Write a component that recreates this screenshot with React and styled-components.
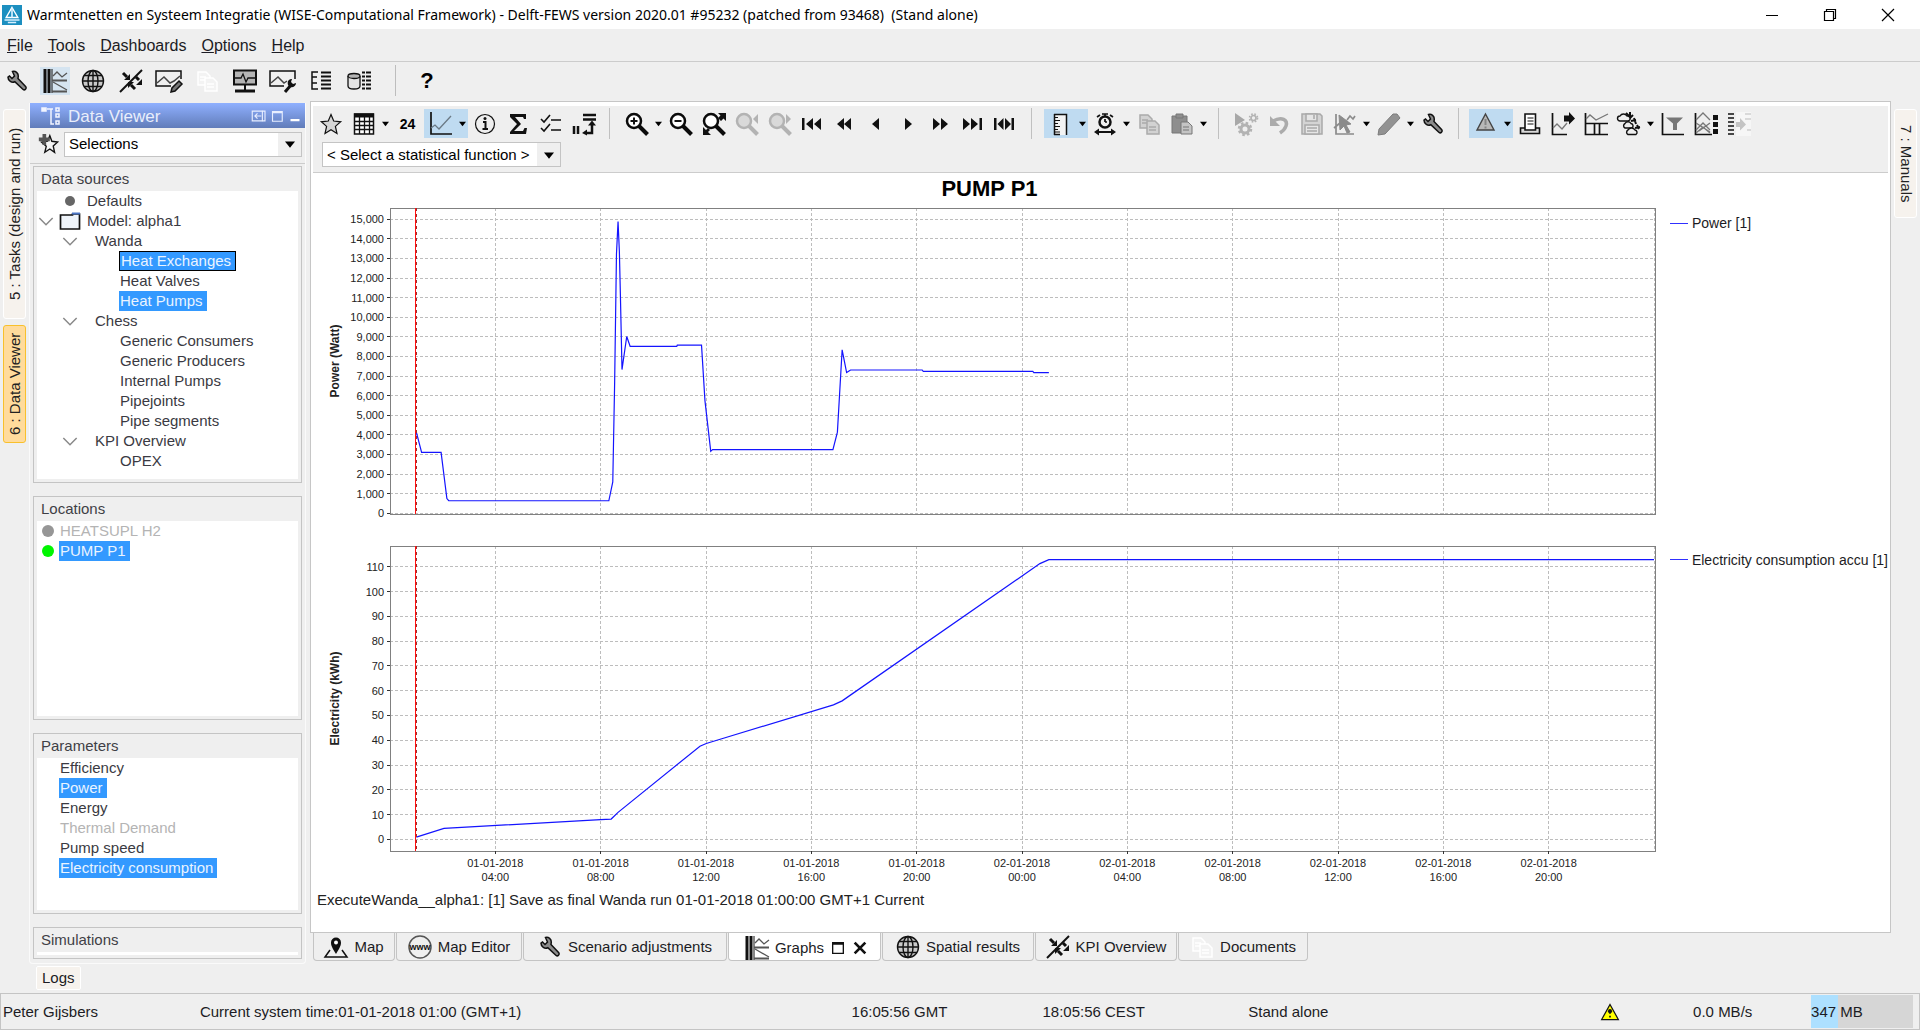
import React, { useLayoutEffect, useRef, useState } from "react";
import styled, { createGlobalStyle, css } from "styled-components";

const GlobalStyle = createGlobalStyle`
  * { box-sizing: border-box; }
  body { margin: 0; background: #efefef; }
  button, select { font: inherit; color: inherit; }
`;

const line = "#cccccc";
const face = "#efefef";
const pick = "#3399ff";

/* ---------- icons, drawn on a 24 x 24 grid ---------- */

const S = "#111111";

const lens = (inner, color = "#0b0b0b", fill = "#ffffff") => (
  <>
    <path d="M14 14l8.500 8.500" stroke={color} strokeWidth="4" />
    <circle cx="9" cy="9" r="7" fill={fill} stroke={color} strokeWidth="2.500" />
    {inner}
  </>
);

const docs = (stroke, fill) => (
  <g fill={fill} stroke={stroke} strokeWidth="1.500">
    <path d="M3 3h8l4 4v9H3z" />
    <path d="M5 8h6M5 11h6" />
    <path d="M10 9h8l4 4v9H10z" />
    <path d="M12 15h7M12 18h7" />
  </g>
);

const icons = {
  wrench: (
    <path
      d="M7.500 2.500c3-.8 6 1.500 5.800 4.700l-.3 2.300 7.800 8.300c1.200 1.500-1 3.900-2.700 2.700l-8.300-7.800c-3 1.300-6.800-.7-6.800-4.500l1.500-1.200 2.500 2.500 2.500-2.500z"
      fill="#8c8c8c"
      stroke={S}
      strokeWidth="1.500"
    />
  ),
  graphs: (
    <g fill="none">
      <path d="M2 0v24M6 0v24" stroke={S} strokeWidth="3" />
      <path d="M9 0v24" stroke={S} />
      <path d="M9 11.500h15M9 22.500h15" stroke="#555" strokeWidth="2" />
      <path d="M10 7l4-4 5 5 5-4M10 13l14 8" stroke="#555" strokeWidth="1.300" />
    </g>
  ),
  globe: (
    <g fill="none" stroke={S} strokeWidth="1.400">
      <circle cx="12" cy="12" r="10.500" fill="#c9c9c9" />
      <ellipse cx="12" cy="12" rx="5" ry="10.500" />
      <path d="M1.500 12h21M3 6.500h18M3 17.500h18M12 1.500v21" />
    </g>
  ),
  sparks: (
    <g stroke={S} fill={S}>
      <path d="M1 23L23 1" strokeWidth="2" />
      <path d="M4 4l4 4M17 8l3 3M16 20l-4-4" strokeWidth="3" />
      <path d="M11 11H5l6-6zM23 16h-6l6-6zM9 13h6l-6 6z" stroke="none" />
    </g>
  ),
  chartEdit: (
    <g fill="none" stroke={S}>
      <path d="M14 17H-1V2h25v8" strokeWidth="1.500" />
      <path d="M0 14l7-6 6 6 4-2 6-5" stroke="#444" strokeWidth="1.500" />
      <path d="M14 23l1-4 7-7 3 3-7 7z" fill="#777" strokeWidth="1.500" />
    </g>
  ),
  docsFaint: docs("#ffffff", "#f3f3f3"),
  monitor: (
    <g fill="none" stroke={S}>
      <path d="M1 1.500h22v14H1z" fill="#b5b5b5" strokeWidth="2" />
      <path d="M2 9h6l2-4 3 8 2-4h7" strokeWidth="1.300" />
      <path d="M12 16v6" strokeWidth="2" />
      <path d="M2 22h20" strokeWidth="3" />
    </g>
  ),
  chartWrench: (
    <g fill="none" stroke={S}>
      <path d="M13 17H-1V2h25v8" strokeWidth="1.500" />
      <path d="M0 14l7-6 6 6 3-2" stroke="#444" strokeWidth="1.500" />
      <path d="M14 23l6-7" strokeWidth="3" />
      <path d="M17 16c-1-4 1-6 4-6l-1 3 2 2 3-1c0 3-3 5-6 4z" fill={S} stroke="none" />
    </g>
  ),
  listTree: (
    <g fill="none" stroke={S}>
      <path d="M9 3H3v17h6M3 8h5M3 14h5" strokeWidth="1.500" />
      <path d="M12 3.500h10M12 7.500h10M12 11.500h10M12 15.500h10M12 19.500h10" strokeWidth="2" />
    </g>
  ),
  dbList: (
    <g fill="none" stroke={S}>
      <path d="M1 7v10c0 4 12 4 12 0V7" fill="#e4e4e4" strokeWidth="1.300" />
      <ellipse cx="7" cy="7" rx="6" ry="2.500" fill="#b5b5b5" strokeWidth="1.300" />
      <path d="M15 3.500h3M15 7.500h3M15 11.500h3M15 15.500h3M15 19.500h3M19 3.500h5M19 7.500h5M19 11.500h5M19 15.500h5M19 19.500h5" strokeWidth="2" />
    </g>
  ),
  star: <path d="M12 2.500l2.700 6.500 7 .8-5.300 4.600 1.600 7.100-6-3.800-6 3.800 1.600-7.100L2.300 9.800l7-.8z" fill="#d5d5d5" stroke={S} strokeWidth="1.200" />,
  starAdd: (
    <g>
      <path d="M14 3l2.200 6 6.300.8-4.800 4.400 1.500 7-5.200-3.700L8.500 21l1.600-6.500L5 10l6.500-1z" fill="#f4f4f4" stroke={S} strokeWidth="1.500" />
      <path d="M6 1h4v4h4v4h-4v4H6V9H2V5h4z" fill="#555" />
    </g>
  ),
  table: (
    <g fill="none" stroke={S}>
      <path d="M2.500 2h19v20h-19z" fill="#fff" strokeWidth="1.500" />
      <path d="M2 3.500h20" strokeWidth="4" />
      <path d="M2 9.500h20M2 13.500h20M2 17.500h20M7.500 5v17M12.500 5v17M17.500 5v17" strokeWidth="1.300" />
    </g>
  ),
  chart: (
    <g fill="none">
      <path d="M2 0v22h21" stroke={S} strokeWidth="1.700" />
      <path d="M2 16l4-3 4 4L22 4" stroke="#6b7a86" strokeWidth="1.300" />
    </g>
  ),
  info: (
    <g stroke={S} fill="none">
      <circle cx="12" cy="12" r="9.500" strokeWidth="1.200" />
      <path d="M10 10h2.500v6.500M9.500 17h5.500" strokeWidth="2" />
      <circle cx="12" cy="6.500" r="1.500" fill={S} stroke="none" />
    </g>
  ),
  sigma: <path d="M4 2h16v5h-2l-1-2H9l6 7-7 7h9l1.500-3H21l-1 6H4v-2l7-8-7-7z" fill={S} />,
  checks: (
    <g fill="none" stroke={S} strokeWidth="1.600">
      <path d="M2 7l3 3 6-7M2 16l3 3 6-7M12 8h10M12 18h10" />
    </g>
  ),
  swap: (
    <g stroke={S} fill={S}>
      <path d="M11 3h13M11 7.500h13M2 14v8M6 14v8" strokeWidth="2.500" />
      <path d="M20 12v9h-6" fill="none" strokeWidth="2.500" />
      <path d="M20 8.500l4 5h-8zM10 21l5-3.500v6z" stroke="none" />
    </g>
  ),
  zoomIn: lens(<path d="M5.500 9h7M9 5.500v7" stroke={S} strokeWidth="2" />),
  zoomOut: lens(<path d="M5.500 9h7" stroke={S} strokeWidth="2" />),
  zoomFit: (
    <g>
      {lens(null)}
      <path d="M16 1h8v8l-2.500-2.500-2.500 2.500-3-3L18.500 3.500zM1 15v8h8l-3-3 2-2-2-2-2 2z" fill={S} />
    </g>
  ),
  zoomPrev: lens(<path d="M23 2v10l-5-5z" fill="#b3b3b3" />, "#b3b3b3", "#d9d9d9"),
  zoomNext: lens(<path d="M18 2v10l5-5z" fill="#b3b3b3" />, "#b3b3b3", "#d9d9d9"),
  first: <path d="M2 6h2.500v12H2zM13 6v12l-7-6zM21 6v12l-7-6z" fill={S} />,
  rewind: <path d="M12 6v12l-7-6zM19 6v12l-7-6z" fill={S} />,
  back: <path d="M15 6v12l-7-6z" fill={S} />,
  next: <path d="M9 6v12l7-6z" fill={S} />,
  forward: <path d="M5 6v12l7-6zM13 6v12l7-6z" fill={S} />,
  last: <path d="M22 6h-2.500v12H22zM11 6v12l7-6zM3 6v12l7-6z" fill={S} />,
  span: <path d="M2 6h2.500v12H2zM11.500 6v12l-6-6zM13 6v12l6-6zM19.500 6H22v12h-2.500z" fill={S} />,
  ruler: (
    <g fill="none" stroke={S}>
      <path d="M5 2h13v21H5z" fill="#f3f3f3" stroke="none" />
      <path d="M5 2.500h12.500V23M5.500 2v21M5 22.500h6" strokeWidth="1.500" />
      <path d="M5 5.500h4M5 8.500h6M5 11.500h4M5 14.500h6M5 17.500h4M5 20h6" strokeWidth="1.200" />
    </g>
  ),
  clock: (
    <g fill="none" stroke={S}>
      <circle cx="12" cy="10" r="5.500" strokeWidth="2.500" />
      <path d="M12 10V7M12 10h2M9 2h6M12 2v3M4 5l3-2M20 5l-3-2" strokeWidth="1.700" />
      <path d="M3 20h18" strokeWidth="2" />
      <path d="M1 20l5-3.500v7zM23 20l-5-3.500v7z" fill={S} stroke="none" />
    </g>
  ),
  copy: docs("#ababab", "#d2d2d2"),
  paste: (
    <g fill="#8e8e8e" stroke="#777">
      <path d="M2 4h15v17H2z" />
      <path d="M6 2h7v4H6z" />
      <path d="M11 10h7l4 4v8H11z" fill="#c4c4c4" />
      <path d="M13 15h6M13 18h6" />
    </g>
  ),
  gears: (
    <g stroke="#b3b3b3" fill="none">
      <path d="M1 1v13l10-6z" fill="#a8a8a8" stroke="none" />
      <circle cx="11" cy="17" r="4" strokeWidth="3" />
      <circle cx="11" cy="17" r="6" strokeWidth="2.500" strokeDasharray="2.500 2.200" />
      <circle cx="19.500" cy="6" r="2.500" strokeWidth="1.700" />
      <circle cx="19.500" cy="6" r="4" strokeWidth="1.700" strokeDasharray="1.600 1.600" />
    </g>
  ),
  undo: (
    <g>
      <path d="M6 9c9-5 15-1 13 5-1 3-3 5-6 7" fill="none" stroke="#ababab" strokeWidth="3.500" />
      <path d="M3 4v10h10z" fill="#ababab" />
    </g>
  ),
  save: (
    <g fill="#d4d4d4" stroke="#a9a9a9" strokeWidth="1.500">
      <path d="M2 2h18l2 2v18H2z" />
      <path d="M6 2h11v7H6zM5 13h14v9H5z" fill="#e6e6e6" />
      <path d="M14 3v4M7 16h10M7 19h10" />
    </g>
  ),
  chartCursor: (
    <g fill="none" stroke="#8b8b8b">
      <path d="M3 2v20h18M1 16l6-5M14 8l3-4 3 3 2-3" strokeWidth="1.700" />
      <path d="M6 3l12 9-5 1 4 7-3 1-3-7-4 4z" fill="#8b8b8b" />
    </g>
  ),
  pencil: <path d="M1 23l1-6L16 2h4l3 4L8 22z" fill="#929292" stroke="#7c7c7c" />,
  warning: (
    <g>
      <path d="M11.500 2L20 18H3z" fill="#b8b8b8" stroke="#444" strokeWidth="1.400" />
      <path d="M11.500 7v6M11.500 14.500v2" stroke="#858585" strokeWidth="2" />
    </g>
  ),
  alert: (
    <g>
      <path d="M12 3L22 21H2z" fill="#ffff00" stroke={S} strokeWidth="1.500" />
      <path d="M12 14v-2M12 16.500v2" stroke={S} strokeWidth="2" />
      <circle cx="12" cy="11" r="2.500" fill={S} />
    </g>
  ),
  printer: (
    <g fill="#fff" stroke={S} strokeWidth="1.600">
      <path d="M2.500 16h19v5.500h-19z" fill="#d8d8d8" />
      <path d="M7 2h10.500v16H7z" />
      <path d="M9.500 6h6M9.500 9h6M9.500 12h6" strokeWidth="1.200" />
    </g>
  ),
  chartOut: (
    <g fill="none" stroke={S}>
      <path d="M1.500 1v21.500H16" strokeWidth="1.700" />
      <path d="M2 16l4-4 5 5 5-6" stroke="#777" strokeWidth="1.300" />
      <path d="M13 3.500h5V0l6 6.500-6 6V9.500h-5z" fill={S} stroke="none" />
    </g>
  ),
  chartBars: (
    <g fill="none" stroke={S}>
      <path d="M1.500 1v21.500H24M1 11.500h23M10.500 12v10M15.500 12v10" strokeWidth="1.700" />
      <path d="M2 7l4-4 6 5 12-6" stroke="#777" strokeWidth="1.300" />
    </g>
  ),
  clouds: (
    <g fill="#eee" stroke={S} strokeWidth="1.400">
      <path d="M9 1l4 4M13 0v6M16 3l-4 4M14 9l5-1M17 6l2 6M20 13l2 4M18 16l5-1" strokeWidth="2" />
      <path d="M3 9a2.500 2.500 0 0 1 0-5 4 4 0 0 1 7 0 2.500 2.500 0 0 1 1 5z" />
      <path d="M8 16a2.500 2.500 0 0 1 0-4.500 3.500 3.500 0 0 1 6 0 2.500 2.500 0 0 1 1 4.500z" />
      <path d="M11 22.500a2.500 2.500 0 0 1 0-4.500 4 4 0 0 1 7 0 2.500 2.500 0 0 1 1 4.500z" />
    </g>
  ),
  filter: (
    <g>
      <path d="M1.500 1v21.500H23" fill="none" stroke={S} strokeWidth="1.700" />
      <path d="M5 5.500h17l-6 6V18h-4v-6.500z" fill="#777" />
    </g>
  ),
  chartSquares: (
    <g fill="none">
      <path d="M1.500 1v21.500H18" stroke={S} strokeWidth="1.700" />
      <path d="M2 8l7-7 7 7M2 18l7-7 7 7M2 21l7-6 7 6M2 11l14 9M16 11L5 19" stroke="#777" strokeWidth="1.300" />
      <path d="M19 3h5v5h-5zM19 10h5v5h-5zM19 17h5v5h-5z" fill={S} />
    </g>
  ),
  listArrow: (
    <g>
      <path d="M9 0h15v24H9z" fill="#f6f6f6" />
      <path d="M1 2h6M1 6h6M1 10h6M1 14h6M1 18h6M1 22h6" stroke={S} strokeWidth="1.500" />
      <path d="M9 10h4V6l6 6.500-6 6V15H9z" fill="#c4c4c4" />
      <path d="M18 2h6M18 7h6M20 18h4" stroke="#cfcfcf" strokeWidth="1.500" />
    </g>
  ),
  pin: (
    <g>
      <path d="M6 15l-5 7h22l-5-7" fill="none" stroke={S} strokeWidth="1.500" />
      <path d="M12 19C8.500 13 7 11 7 7.500a5 5 0 0 1 10 0c0 3.500-1.500 5.500-5 11.500z" fill={S} />
      <circle cx="12" cy="7.500" r="2" fill="#fff" />
    </g>
  ),
  www: (
    <g>
      <circle cx="12" cy="12" r="11" fill="none" stroke="#555" strokeWidth="1.500" />
      <text x="12" y="15" textAnchor="middle" fontFamily="Liberation Sans, sans-serif" fontWeight="700" fontSize="9" fill={S}>www</text>
    </g>
  ),
  tree: (
    <g stroke="#f2f5ff" fill="none" strokeWidth="1.500">
      <path d="M2 4h4v3H2z" fill="#f2f5ff" />
      <path d="M7 5h6M11 5v15h3" />
      <path d="M16 4h3v3h-3zM16 10h3v3h-3zM16 17h3v3h-3z" />
    </g>
  ),
  dock: (
    <g stroke="#e8eeff" fill="none" strokeWidth="1.500">
      <path d="M3 5.500h17v13H3z" />
      <path d="M16.500 5v14M7 12h8M10 8.500L6.500 12l3.500 3.500" />
    </g>
  ),
  maximise: <path d="M6 6h13v13H6zM6 7.500h13" stroke="#e8eeff" fill="none" strokeWidth="1.500" />,
  minimise: <path d="M6 17.500h12" stroke="#ffffff" strokeWidth="3" />,
  folder: (
    <g>
      <path d="M2.500 6h12v-1h7v15h-19z" fill="#eef3f9" stroke={S} strokeWidth="1.700" />
      <path d="M14 4.500h8" stroke="#4a74c4" strokeWidth="2" />
    </g>
  ),
  bullet: <circle cx="12" cy="12" r="5" fill="#666" />,
  chevron: <path d="M2 7.500l10 10 10-10" fill="none" stroke="#888" strokeWidth="2.200" />,
  winMin: <path d="M6 12.500h12" stroke="#000" />,
  winRestore: <path d="M6.500 8.500h9v9h-9zM8.500 8V6.500h9v9H16" fill="none" stroke="#000" strokeWidth="1.200" />,
  winClose: <path d="M6 6l12 12M18 6L6 18" stroke="#000" strokeWidth="1.200" />,
  tabMax: <path d="M4 4h16v16H4zM4 6h16" fill="none" stroke={S} strokeWidth="2" />,
  tabClose: <path d="M4 4l16 16M20 4L4 20" stroke={S} strokeWidth="4" />,
  app: (
    <g>
      <path d="M0 0h24v24H0z" fill="#1c8fc0" />
      <path d="M12 3l7 12H5z" fill="none" stroke="#fff" strokeWidth="1.700" />
      <path d="M12 4v11M3 18h18M7 21h10" stroke="#d5efff" strokeWidth="2" />
    </g>
  ),
};

const Svg = styled.svg`
  display: block;
  flex: none;
  overflow: visible;
`;
const Icon = ({ name, size = 24 }) => (
  <Svg width={size} height={size} viewBox="0 0 24 24" aria-hidden="true">
    {icons[name]}
  </Svg>
);
const Caret = ({ size = 8 }) => (
  <Svg width={size} height={size} viewBox="0 0 8 8" aria-hidden="true">
    <path d="M0 2h8L4 7z" fill="#000" />
  </Svg>
);

/* ---------- frame ---------- */

const bare = css`
  border: 0;
  padding: 0;
  margin: 0;
  background: transparent;
`;

const Window = styled.div`
  display: flex;
  flex-direction: column;
  height: 100vh;
  min-height: 720px;
  background: ${face};
  color: #1c1c24;
  font: 15px/20px "Liberation Sans", Arial, sans-serif;
`;
const TitleBar = styled.header`
  display: flex;
  align-items: center;
  height: 29px;
  padding: 0 12px 0 2px;
  gap: 5px;
  background: #ffffff;
  color: #000;
`;
const WindowTitle = styled.h1`
  flex: 1;
  margin: 0;
  font: 400 14px/20px "Noto Sans", "Segoe UI", sans-serif;
  white-space: nowrap;
  overflow: hidden;
`;
const WindowButtons = styled.div`
  display: flex;
  gap: 34px;
  padding-right: 8px;
`;
const BareButton = styled.button`
  ${bare}
`;
const MenuBar = styled.nav`
  display: flex;
  align-items: center;
  gap: 15px;
  height: 33px;
  padding: 1px 7px 0;
  border-bottom: 1px solid ${line};
  font-size: 16px;
`;
const MainTools = styled.div`
  display: flex;
  align-items: center;
  gap: 8px;
  height: 39px;
  padding: 0 2px 2px;
`;
const MainTool = styled.button`
  ${bare}
  display: grid;
  place-items: center;
  width: 30px;
  height: 28px;
  background: ${(p) => (p.$on ? "#d5e4f0" : "transparent")};
  font-size: 22px;
  font-weight: 700;
  color: #000;
`;
const MainRule = styled.span`
  width: 1px;
  height: 31px;
  margin: 0 8px 0 13px;
  background: #bdbdbd;
`;
const Body = styled.div`
  display: flex;
  flex: 1;
  min-height: 0;
`;
const Strip = styled.div`
  display: flex;
  flex: none;
  flex-direction: column;
  gap: 6px;
  width: 29px;
  padding: 8px 3px;
`;
const SideTab = styled.button`
  ${bare}
  width: 23px;
  height: ${(p) => p.$length}px;
  border: 1px solid ${(p) => (p.$on ? "#f8c02c" : "#ffffff")};
  border-radius: 3px;
  background: ${(p) => (p.$on ? "#ffdb9c" : "#f6f2ed")};
  color: #222;
  writing-mode: vertical-rl;
  transform: ${(p) => (p.$up ? "rotate(180deg)" : "none")};
  line-height: 20px;
  white-space: nowrap;
`;

/* ---------- data viewer ---------- */

const Viewer = styled.aside`
  display: flex;
  flex: none;
  flex-direction: column;
  width: 277px;
  margin: 2px 4px 0 0;
  border: 1px solid #fafafa;
  border-top: 0;
  border-radius: 0 0 4px 4px;
`;
const ViewerHead = styled.div`
  display: flex;
  align-items: center;
  height: 25px;
  padding: 0 1px 0 10px;
  background: linear-gradient(#8fb0ff, #617cb9);
  color: #e9eefb;
`;
const ViewerName = styled.h2`
  flex: 1;
  margin: 2px 0 0 4px;
  font-size: 17px;
  font-weight: 400;
`;
const ViewerPick = styled.div`
  display: flex;
  align-items: center;
  gap: 5px;
  height: 36px;
  padding: 0 3px 3px 7px;
  border-bottom: 1px solid ${line};
`;
const Combo = styled.label`
  display: grid;
  grid-template-columns: 1fr 23px;
  align-items: center;
  flex: ${(p) => (p.$width ? "none" : "1")};
  width: ${(p) => p.$width || "auto"};
  min-width: 0;
  height: 25px;
  border: 1px solid #c4c4c4;
  background: linear-gradient(to left, ${face} 23px, #fff 23px);
  color: #000;
  & > select {
    ${bare}
    grid-area: 1 / 1 / 2 / 3;
    height: 23px;
    padding: 0 0 0 4px;
    appearance: none;
  }
  & > svg {
    grid-area: 1 / 2;
    justify-self: center;
    pointer-events: none;
  }
`;
const Groups = styled.div`
  display: flex;
  flex: 1;
  flex-direction: column;
  gap: 13px;
  min-height: 0;
  padding: 2px 3px 4px;
`;
/* the grow share leaves out the 5px that border and padding take */
const Group = styled.section`
  display: flex;
  flex-direction: column;
  flex: ${(p) => p.$share} 1 0;
  min-height: 0;
  padding: 0 3px 3px;
  border: 1px solid #c4c4c4;
  color: #3f3f46;
`;
const GroupName = styled.h3`
  flex: none;
  height: 24px;
  margin: 0;
  padding: 2px 4px;
  font-size: 15px;
  line-height: 20px;
  font-weight: 400;
`;
const Items = styled.ul`
  flex: 1;
  min-height: 0;
  margin: 0;
  padding: 0;
  list-style: none;
  background: #fff;
  overflow: hidden;
`;
const Item = styled.li`
  display: flex;
  align-items: center;
  height: 20px;
  padding-left: ${(p) => p.$indent || 0}px;
`;
const Slot = styled.span`
  display: grid;
  place-items: center;
  flex: none;
  width: ${(p) => p.$w}px;
`;
const Choice = styled.button`
  ${bare}
  height: 20px;
  padding: 0 4px 0 1px;
  line-height: 18px;
  border: ${(p) => (p.$focus ? "1px solid #000" : "0")};
  background: ${(p) => (p.$on ? pick : "transparent")};
  color: ${(p) => (p.$on ? "#eaf4ff" : "#3a3a42")};
  white-space: nowrap;
  &:disabled { color: #b4b4b4; }
`;
const Dot = styled.span`
  width: 12px;
  height: 12px;
  margin: 0 5px 0 2px;
  border-radius: 50%;
  background: ${(p) => p.$color};
`;

const tree = [
  { label: "Defaults", level: 1, icon: "bullet" },
  { label: "Model: alpha1", level: 1, icon: "folder", open: true },
  { label: "Wanda", level: 2, open: true },
  { label: "Heat Exchanges", level: 3, on: true, focus: true },
  { label: "Heat Valves", level: 3 },
  { label: "Heat Pumps", level: 3, on: true },
  { label: "Chess", level: 2, open: true },
  { label: "Generic Consumers", level: 3 },
  { label: "Generic Producers", level: 3 },
  { label: "Internal Pumps", level: 3 },
  { label: "Pipejoints", level: 3 },
  { label: "Pipe segments", level: 3 },
  { label: "KPI Overview", level: 2, open: true },
  { label: "OPEX", level: 3 },
];
const parameters = [
  { label: "Efficiency" },
  { label: "Power", on: true },
  { label: "Energy" },
  { label: "Thermal Demand", off: true },
  { label: "Pump speed" },
  { label: "Electricity consumption", on: true },
];

const TreeRow = ({ label, level, icon, open, on, focus }) => (
  <Item $indent={level === 1 ? 0 : level === 2 ? 24 : 82}>
    {level < 3 && <Slot $w={17}>{open && <Icon name="chevron" size={16} />}</Slot>}
    {level < 3 && <Slot $w={level === 1 ? 32 : 16}>{icon && <Icon name={icon} />}</Slot>}
    <Choice type="button" $on={on} $focus={focus}>{label}</Choice>
  </Item>
);

const DataViewer = () => (
  <Viewer>
    <ViewerHead>
      <Icon name="tree" />
      <ViewerName>Data Viewer</ViewerName>
      {["dock", "maximise", "minimise"].map((n) => (
        <BareButton key={n} type="button" aria-label={n}><Icon name={n} size={18} /></BareButton>
      ))}
    </ViewerHead>
    <ViewerPick>
      <BareButton type="button" aria-label="Add to selections"><Icon name="starAdd" size={22} /></BareButton>
      <Combo>
        <select aria-label="Selections"><option>Selections</option></select>
        <Caret size={10} />
      </Combo>
    </ViewerPick>
    <Groups>
      <Group $share={312}>
        <GroupName>Data sources</GroupName>
        <Items>{tree.map((t) => <TreeRow key={t.label} {...t} />)}</Items>
      </Group>
      <Group $share={220}>
        <GroupName>Locations</GroupName>
        <Items>
          <Item $indent={3}><Dot $color="#969696" /><Choice type="button" disabled>HEATSUPL H2</Choice></Item>
          <Item $indent={3}><Dot $color="#00f500" /><Choice type="button" $on>PUMP P1</Choice></Item>
        </Items>
      </Group>
      <Group $share={176}>
        <GroupName>Parameters</GroupName>
        <Items>
          {parameters.map((p) => (
            <Item key={p.label} $indent={22}>
              <Choice type="button" $on={p.on} disabled={p.off}>{p.label}</Choice>
            </Item>
          ))}
        </Items>
      </Group>
      <Group $share={27}>
        <GroupName>Simulations</GroupName>
        <Items />
      </Group>
    </Groups>
  </Viewer>
);

/* ---------- graph display ---------- */

const Main = styled.main`
  display: flex;
  flex: 1;
  flex-direction: column;
  min-width: 0;
  padding-bottom: 3px;
`;
const Display = styled.div`
  display: flex;
  flex: 1;
  flex-direction: column;
  min-height: 0;
  padding: 4px 2px 0;
  border: 1px solid #c6c6c6;
  background: #fff;
`;
const GraphTools = styled.div`
  padding: 2px 0 5px;
  background: ${face};
  border-bottom: 1px solid ${line};
`;
const ToolRow = styled.div`
  display: flex;
  align-items: center;
  height: 31px;
  padding-left: 1px;
`;
const ComboRow = styled.div`
  padding: 3px 0 0 9px;
`;
const Tool = styled.button`
  ${bare}
  display: flex;
  align-items: center;
  height: 29px;
  background: ${(p) => (p.$on ? "#bfdbf1" : "transparent")};
  color: #000;
  font-weight: 700;
  font-size: 14px;
`;
const ToolFace = styled.span`
  display: grid;
  place-items: center;
  width: ${(p) => (p.$narrow ? 32 : 33)}px;
`;
const CaretFace = styled.span`
  display: grid;
  width: 11px;
  place-items: center;
`;
const ToolRule = styled.span`
  width: 1px;
  height: 31px;
  margin: 0 ${(p) => (p.$wide ? 12 : 10)}px 0 ${(p) => (p.$wide ? 11 : 9)}px;
  background: #c0c0c0;
`;

const graphTools = [
  "star", "table+", "24", "chart+!", "info", "sigma", "checks", "swap", "|",
  "zoomIn+", "zoomOut", "zoomFit", "zoomPrev", "zoomNext",
  "first<", "rewind<", "back<", "next<", "forward<", "last<", "span<", "||",
  "ruler+!", "clock+", "copy", "paste+", "|",
  "gears", "undo", "save", "chartCursor+", "pencil+", "wrench", "|",
  "warning+!", "printer", "chartOut", "chartBars", "clouds+", "filter", "chartSquares", "listArrow",
];

const GraphToolbar = () => (
  <ToolRow>
    {graphTools.map((t, i) => {
      if (t[0] === "|") return <ToolRule key={i} $wide={t === "||"} />;
      const name = t.replace(/[+!<]/g, "");
      return (
        <Tool key={i} type="button" aria-label={name} $on={t.includes("!")}>
          <ToolFace $narrow={t.includes("<")}>{name === "24" ? "24" : <Icon name={name} />}</ToolFace>
          {t.includes("+") && <CaretFace><Caret size={7} /></CaretFace>}
        </Tool>
      );
    })}
  </ToolRow>
);

const Plots = styled.div`
  display: grid;
  flex: 1;
  grid-template-columns: minmax(0, 1fr) 222px;
  grid-template-rows: 30px minmax(0, 328fr) minmax(0, 358fr) 44px;
  min-height: 0;
`;
const PlotTitle = styled.h2`
  margin: 0;
  font-size: 22px;
  line-height: 32px;
  font-weight: 700;
  text-align: center;
  color: #000;
`;
const Legend = styled.div`
  display: flex;
  grid-column: 2;
  align-items: center;
  align-self: start;
  gap: 4px;
  margin-top: ${(p) => p.$top}px;
  padding-left: 4px;
  font-size: 14px;
  white-space: nowrap;
`;
const LegendLine = styled.span`
  width: 18px;
  height: 1px;
  background: #3030ff;
`;
const PlotBox = styled.div`
  grid-column: 1;
  min-width: 0;
  min-height: 0;
  overflow: hidden;
`;
const PlotNote = styled.p`
  grid-column: 1 / 3;
  margin: 0;
  padding: 2px 4px;
  color: #222;
`;

const power = [
  [1, 4144], [1.2, 3110], [1.94, 3110], [2.16, 750], [2.23, 640], [8.31, 640], [8.46, 1600], [8.53, 6620],
  [8.6, 13220], [8.66, 14880], [8.71, 13370], [8.75, 11090], [8.81, 7330], [8.99, 9020], [9.12, 8510],
  [10.89, 8510], [10.91, 8580], [11.83, 8580], [11.96, 5750], [12.18, 3160], [12.25, 3250], [16.82, 3250],
  [16.99, 4140], [17.17, 8340], [17.34, 7180], [17.49, 7310], [20.21, 7310], [20.25, 7240], [24.41, 7240],
  [24.45, 7180], [25.02, 7180],
];
const electricity = [
  [1, 0.9], [2.05, 4.4], [8, 8], [8.4, 8.2], [8.66, 10.9], [11.77, 37.6], [12.01, 38.7], [12.6, 40.6],
  [16.84, 54.3], [17.17, 55.9], [24.68, 111.3], [25.02, 112.9], [48, 112.9],
];

function useSize() {
  const ref = useRef(null);
  const [size, setSize] = useState({ w: 0, h: 0 });
  useLayoutEffect(() => {
    const read = () => setSize({ w: ref.current.clientWidth, h: ref.current.clientHeight });
    read();
    const watcher = new ResizeObserver(read);
    watcher.observe(ref.current);
    return () => watcher.disconnect();
  }, []);
  return [ref, size];
}

const hours = [4, 8, 12, 16, 20, 24, 28, 32, 36, 40, 44];
const dayLabel = (h) => (h < 24 ? "01-01-2018" : "02-01-2018");
const hourLabel = (h) => String(h % 24).padStart(2, "0") + ":00";

const Plot = ({ label, data, min, max, step, last, top, bottom, dates }) => {
  const [ref, { w, h }] = useSize();
  const left = 77;
  const right = w - 11;
  const base = h - bottom;
  const x = (t) => left + (t / 48) * (right - left - 1);
  const y = (v) => base - ((v - min) / (max - min)) * (base - top);
  const ticks = [];
  for (let v = 0; v <= last; v += step) ticks.push(v);
  const mid = (top + base) / 2;
  const now = Math.floor(x(1));
  return (
    <PlotBox ref={ref}>
      {w > 0 && (
        <Svg width={w} height={h} fontFamily="Liberation Sans, Arial, sans-serif" fontSize="11" fill="#222">
          <g stroke="#bdbdbd" strokeDasharray="3 2" shapeRendering="crispEdges">
            {ticks.map((v) => <line key={v} x1={left} x2={right} y1={y(v)} y2={y(v)} />)}
            {[...hours, 48].map((t) => <line key={t} x1={x(t)} x2={x(t)} y1={top} y2={base} />)}
          </g>
          <rect x={left} y={top} width={right - left} height={base - top} fill="none" stroke="#808080" shapeRendering="crispEdges" />
          <g stroke="#333" shapeRendering="crispEdges">
            {ticks.map((v) => <line key={v} x1={left - 3} x2={left} y1={y(v)} y2={y(v)} />)}
            {dates && hours.map((t) => <line key={t} x1={x(t)} x2={x(t)} y1={base} y2={base + 3} />)}
          </g>
          {ticks.map((v) => (
            <text key={v} x={left - 6} y={y(v) + 4} textAnchor="end">{v.toLocaleString("en-US")}</text>
          ))}
          {dates && hours.map((t) => (
            <text key={t} textAnchor="middle">
              <tspan x={x(t)} y={base + 16}>{dayLabel(t)}</tspan>
              <tspan x={x(t)} y={base + 30}>{hourLabel(t)}</tspan>
            </text>
          ))}
          <text transform={`translate(26 ${mid}) rotate(-90)`} textAnchor="middle" fontSize="12" fontWeight="700">{label}</text>
          <polyline points={data.map(([t, v]) => `${x(t)},${y(v)}`).join(" ")} fill="none" stroke="#1414ff" strokeWidth="1.200" />
          <g fill="none" shapeRendering="crispEdges">
            <path d={`M${now - 1} ${top}V${base}`} stroke="#ff1010" />
            <path d={`M${now} ${top}V${base}`} stroke="#9a3030" strokeDasharray="3 3" />
          </g>
        </Svg>
      )}
    </PlotBox>
  );
};

const Tabs = styled.nav`
  display: flex;
  flex: none;
  gap: 1px;
  height: 28px;
  padding-left: 3px;
`;
const Tab = styled.button`
  ${bare}
  display: flex;
  align-items: center;
  justify-content: center;
  gap: 6px;
  min-width: ${(p) => p.$w}px;
  border: 1px solid #c4c4c4;
  border-top: 0;
  border-radius: 0 0 4px 4px;
  background: ${(p) => (p.$on ? "#fff" : face)};
  padding: ${(p) => (p.$on ? "3px 0 0 4px" : "0")};
`;
const tabs = [
  ["pin", "Map", 82], ["www", "Map Editor", 126], ["wrench", "Scenario adjustments", 204],
  ["graphs", "Graphs", 153, true], ["globe", "Spatial results", 152], ["sparks", "KPI Overview", 142],
  ["docsFaint", "Documents", 130],
];

/* ---------- bottom ---------- */

const LogsRow = styled.div`
  height: 29px;
  padding: 2px 36px;
`;
const LogsButton = styled.button`
  ${bare}
  height: 24px;
  padding: 0 5px;
  border: 1px solid #fff;
  border-radius: 2px;
  background: #f6f2ed;
`;
const Status = styled.footer`
  display: grid;
  grid-template-columns: 197fr 652fr 191fr 206fr 352fr 93fr 118fr 102fr;
  align-items: center;
  height: 37px;
  padding: 0 6px 0 2px;
  border: 1px solid #c4c4c4;
  white-space: nowrap;
`;
const Memory = styled.div`
  height: 33px;
  line-height: 33px;
  background: linear-gradient(to right, #ade0ff 26%, #d6d6d6 26%);
`;

const Menu = ({ label }) => (
  <BareButton type="button"><u>{label[0]}</u>{label.slice(1)}</BareButton>
);

export default function App() {
  return (
    <Window>
      <GlobalStyle />
      <TitleBar>
        <Icon name="app" size={20} />
        <WindowTitle>
          Warmtenetten en Systeem Integratie (WISE-Computational Framework) - Delft-FEWS version 2020.01 #95232 (patched from 93468)&nbsp; (Stand alone)
        </WindowTitle>
        <WindowButtons>
          {["winMin", "winRestore", "winClose"].map((n) => (
            <BareButton key={n} type="button" aria-label={n}><Icon name={n} /></BareButton>
          ))}
        </WindowButtons>
      </TitleBar>
      <MenuBar>
        {["File", "Tools", "Dashboards", "Options", "Help"].map((m) => <Menu key={m} label={m} />)}
      </MenuBar>
      <MainTools>
        {["wrench", "graphs", "globe", "sparks", "chartEdit", "docsFaint", "monitor", "chartWrench", "listTree", "dbList"].map((n) => (
          <MainTool key={n} type="button" aria-label={n} $on={n === "graphs"}><Icon name={n} /></MainTool>
        ))}
        <MainRule />
        <MainTool type="button">?</MainTool>
      </MainTools>
      <Body>
        <Strip>
          <SideTab type="button" $up $length={210}>5 : Tasks (design and run)</SideTab>
          <SideTab type="button" $up $on $length={118}>6 : Data Viewer</SideTab>
        </Strip>
        <DataViewer />
        <Main>
          <Display>
            <GraphTools>
              <GraphToolbar />
              <ComboRow>
                <Combo $width="239px">
                  <select aria-label="Statistical function"><option>&lt; Select a statistical function &gt;</option></select>
                  <Caret size={10} />
                </Combo>
              </ComboRow>
            </GraphTools>
            <Plots>
              <PlotTitle>PUMP P1</PlotTitle>
              <Plot label="Power (Watt)" data={power} min={-36} max={15574} step={1000} last={15000} top={5} bottom={17} />
              <Legend $top={10}><LegendLine />Power [1]</Legend>
              <Plot label="Electricity (kWh)" data={electricity} min={-4.7} max={118.4} step={10} last={110} top={15} bottom={37} dates />
              <Legend $top={19}><LegendLine />Electricity consumption accu [1]</Legend>
              <PlotNote>ExecuteWanda__alpha1: [1] Save as final Wanda run 01-01-2018 01:00:00 GMT+1 Current</PlotNote>
            </Plots>
          </Display>
          <Tabs>
            {tabs.map(([icon, label, w, on]) => (
              <Tab key={label} type="button" $w={w} $on={on}>
                <Icon name={icon} />
                {label}
                {on && <Icon name="tabMax" size={16} />}
                {on && <Icon name="tabClose" size={16} />}
              </Tab>
            ))}
          </Tabs>
        </Main>
        <Strip>
          <SideTab type="button" $length={109}>7 : Manuals</SideTab>
        </Strip>
      </Body>
      <LogsRow><LogsButton type="button">Logs</LogsButton></LogsRow>
      <Status>
        <span>Peter Gijsbers</span>
        <span>Current system time:01-01-2018 01:00 (GMT+1)</span>
        <span>16:05:56 GMT</span>
        <span>18:05:56 CEST</span>
        <span>Stand alone</span>
        <Icon name="alert" size={20} />
        <span>0.0 MB/s</span>
        <Memory>347 MB</Memory>
      </Status>
    </Window>
  );
}
